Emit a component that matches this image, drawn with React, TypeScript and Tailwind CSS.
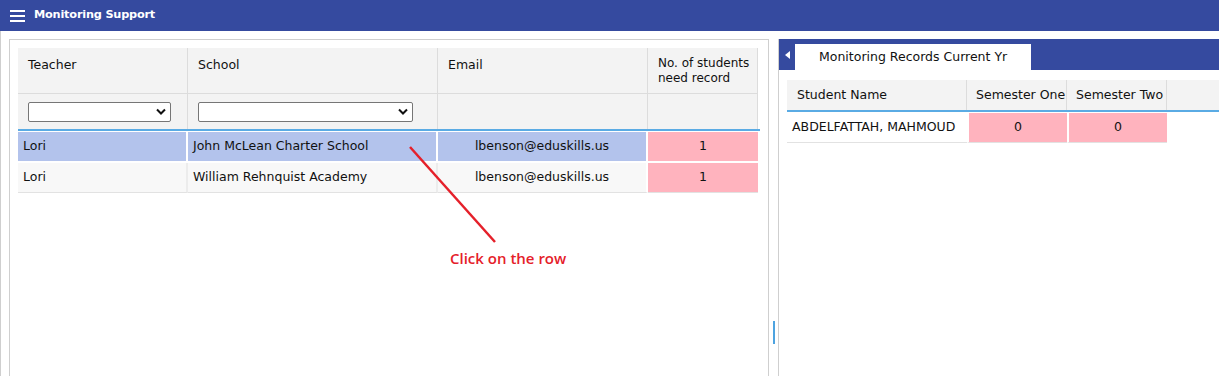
import React from "react";

const F = { fontFamily: '"DejaVu Sans", "Noto Sans", sans-serif' };

function Select({ w }: { w: string }) {
  return (
    <div className={`${w} h-[20px] border border-[#767676] rounded-[2px] bg-white flex items-center justify-end pr-[4px]`}>
      <svg width="10" height="7" viewBox="0 0 10 7">
        <path d="M1 1.5 L5 5.5 L9 1.5" fill="none" stroke="#111" strokeWidth="2" />
      </svg>
    </div>
  );
}

export default function App() {
  return (
    <div className="w-[1219px] h-[376px] overflow-hidden bg-white text-[#111] relative" style={F}>
      {/* top bar */}
      <div className="h-[31px] bg-[#354a9f] flex items-center pl-[10px]">
        <div className="flex flex-col gap-[3px] w-[15px]">
          <span className="block h-[2px] bg-white" />
          <span className="block h-[2px] bg-white" />
          <span className="block h-[2px] bg-white" />
        </div>
        <span className="ml-[9px] text-white font-bold text-[11.3px] tracking-[-0.2px]">Monitoring Support</span>
      </div>

      <div className="flex h-[345px] border-l border-[#cfcfcf]">
        {/* left panel */}
        <div className="ml-[8px] mt-[8px] w-[760px] h-[400px] border border-[#cfcfcf] p-[8px]">
          <div className="w-[740px] text-[12.5px]">
            {/* header */}
            <div className="grid grid-cols-[170px_250px_210px_110px] bg-[#f3f3f3]">
              <div className="h-[46px] border-r border-b border-[#dcdcdc] pl-[10px] pt-[8px]">Teacher</div>
              <div className="h-[46px] border-r border-b border-[#dcdcdc] pl-[10px] pt-[8px]">School</div>
              <div className="h-[46px] border-r border-b border-[#dcdcdc] pl-[10px] pt-[8px]">Email</div>
              <div className="h-[46px] border-r border-b border-[#dcdcdc] pl-[10px] pt-[8px] leading-[15px] text-[12px]">No. of students need record</div>
              <div className="h-[35px] border-r border-[#dcdcdc] pl-[10px] flex items-center"><Select w="w-[143px]" /></div>
              <div className="h-[35px] border-r border-[#dcdcdc] pl-[10px] flex items-center"><Select w="w-[215px]" /></div>
              <div className="h-[35px] border-r border-[#dcdcdc]" />
              <div className="h-[35px] border-r border-[#dcdcdc]" />
            </div>
            <div className="h-[2px] bg-[#5aabe4] w-[742px]" />
            {/* rows */}
            <div className="grid grid-cols-[170px_250px_210px_110px] border-t border-white">
              <div className="h-[31px] bg-[#b3c3ec] border-r-2 border-b-2 border-white pl-[5px] flex items-center">Lori</div>
              <div className="h-[31px] bg-[#b3c3ec] border-r-2 border-b-2 border-white pl-[5px] flex items-center">John McLean Charter School</div>
              <div className="h-[31px] bg-[#b3c3ec] border-r-2 border-b-2 border-white flex items-center justify-center">lbenson@eduskills.us</div>
              <div className="h-[31px] bg-[#ffb3be] border-b-2 border-white flex items-center justify-center">1</div>
              <div className="h-[30px] bg-[#f8f8f8] border-r-2 border-b border-r-[#ececec] border-b-[#e2e2e2] pl-[5px] flex items-center">Lori</div>
              <div className="h-[30px] bg-[#f8f8f8] border-r-2 border-b border-r-[#ececec] border-b-[#e2e2e2] pl-[5px] flex items-center">William Rehnquist Academy</div>
              <div className="h-[30px] bg-[#f8f8f8] border-r-2 border-b border-r-white border-b-[#e2e2e2] flex items-center justify-center">lbenson@eduskills.us</div>
              <div className="h-[30px] bg-[#ffb3be] border-b border-[#e2e2e2] flex items-center justify-center">1</div>
            </div>
          </div>
        </div>

        {/* splitter */}
        <div className="w-[9px] flex justify-center pt-[290px]">
          <div className="w-[2px] h-[23px] bg-[#4da3e0]" />
        </div>

        {/* right panel */}
        <div className="mt-[8px] flex-1 border-l border-[#cfcfcf] h-[400px]">
          <div className="h-[31px] bg-[#354a9f] flex items-end">
            <div className="w-[16px] h-[31px] flex items-center justify-center">
              <svg width="5" height="8" viewBox="0 0 5 8"><path d="M5 0 L0 4 L5 8 Z" fill="white" /></svg>
            </div>
            <div className="w-[236px] h-[26px] bg-white text-[12.5px] pl-[24px] flex items-center">Monitoring Records Current Yr</div>
          </div>
          <div className="pl-[8px] pt-[10px] text-[12.5px]">
            <div className="grid grid-cols-[180px_100px_100px_1fr] bg-[#f3f3f3]">
              <div className="h-[30px] border-r border-[#dcdcdc] pl-[10px] flex items-center whitespace-nowrap">Student Name</div>
              <div className="h-[30px] border-r border-[#dcdcdc] pl-[9px] flex items-center whitespace-nowrap overflow-hidden">Semester One</div>
              <div className="h-[30px] border-r border-[#dcdcdc] pl-[9px] flex items-center whitespace-nowrap overflow-hidden">Semester Two</div>
              <div className="h-[30px]" />
            </div>
            <div className="h-[2px] bg-[#5aabe4]" />
            <div className="grid grid-cols-[180px_100px_100px_1fr] border-t border-white">
              <div className="h-[30px] border-b border-[#e2e2e2] pl-[5px] flex items-center whitespace-nowrap">ABDELFATTAH, MAHMOUD</div>
              <div className="h-[30px] bg-[#ffb3be] border-l-2 border-white border-b border-b-[#e2e2e2] flex items-center justify-center">0</div>
              <div className="h-[30px] bg-[#ffb3be] border-l-2 border-white border-b border-b-[#e2e2e2] flex items-center justify-center">0</div>
              <div />
            </div>
          </div>
        </div>
      </div>

      {/* annotation */}
      <svg className="absolute left-0 top-0 pointer-events-none" width="1219" height="376">
        <line x1="410" y1="147" x2="495" y2="242" stroke="#e5202a" strokeWidth="2.5" />
      </svg>
      <div
        className="absolute left-[450px] top-[247px] text-[#e5202a] font-semibold text-[15px]"
        style={{ fontFamily: '"Open Sans", sans-serif' }}
      >
        Click on the row
      </div>
    </div>
  );
}
